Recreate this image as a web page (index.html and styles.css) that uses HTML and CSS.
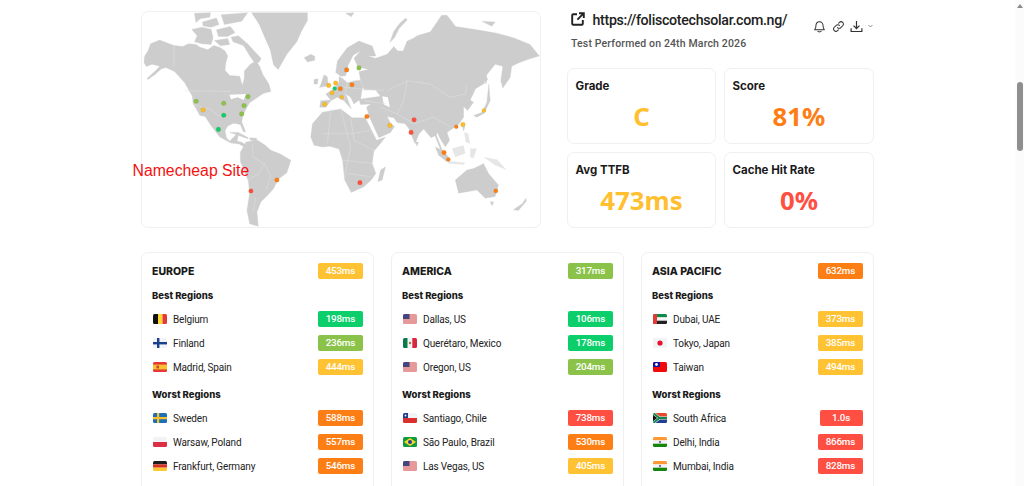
FILE: index.html
```html
<!DOCTYPE html>
<html lang="en">
<head>
    <meta charset="UTF-8">
    <meta name="viewport" content="width=device-width, initial-scale=1.0">
    <title>Test Result</title>
    <link rel="stylesheet" href="styles.css">
</head>
<body>
    <!-- Flags -->
    <svg class="defs" width="0" height="0">
        <symbol id="be" viewBox="0 0 14 10"><rect width="5" height="10" fill="#111"/><rect x="5" width="4.5" height="10" fill="#fdd835"/><rect x="9.5" width="4.5" height="10" fill="#e53935"/></symbol>
        <symbol id="fi" viewBox="0 0 14 10"><rect width="14" height="10" fill="#f1f3f6"/><rect y="4" width="14" height="2.4" fill="#1a3f8b"/><rect x="4" width="2.4" height="10" fill="#1a3f8b"/></symbol>
        <symbol id="es" viewBox="0 0 14 10"><rect width="14" height="10" fill="#e53935"/><rect y="2.6" width="14" height="4.8" fill="#fbc02d"/><rect x="3.5" y="3.6" width="2.4" height="2.8" fill="#c6452b"/></symbol>
        <symbol id="se" viewBox="0 0 14 10"><rect width="14" height="10" fill="#1f6fb5"/><rect y="4" width="14" height="2.2" fill="#fbc02d"/><rect x="4" width="2.2" height="10" fill="#fbc02d"/></symbol>
        <symbol id="pl" viewBox="0 0 14 10"><rect width="14" height="5" fill="#f1f3f6"/><rect y="5" width="14" height="5" fill="#dc2f45"/></symbol>
        <symbol id="de" viewBox="0 0 14 10"><rect width="14" height="3.4" fill="#1c1c1c"/><rect y="3.4" width="14" height="3.3" fill="#d93025"/><rect y="6.7" width="14" height="3.3" fill="#fdc82f"/></symbol>
        <symbol id="us" viewBox="0 0 14 10"><rect width="14" height="10" fill="#f3d3d3"/><path d="M0 1h14M0 3h14M0 5h14M0 7h14M0 9h14" stroke="#d9605f" stroke-width="1"/><rect width="6.5" height="5" fill="#46467f"/></symbol>
        <symbol id="mx" viewBox="0 0 14 10"><rect width="4.7" height="10" fill="#0b7a4b"/><rect x="4.7" width="4.6" height="10" fill="#f4f4f4"/><rect x="9.3" width="4.7" height="10" fill="#d8283f"/><circle cx="7" cy="5" r="1.2" fill="#9a7a4a"/></symbol>
        <symbol id="cl" viewBox="0 0 14 10"><rect width="14" height="5" fill="#f1f3f6"/><rect y="5" width="14" height="5" fill="#da2f2f"/><rect width="5" height="5" fill="#1d3f8f"/><circle cx="2.5" cy="2.5" r=".9" fill="#fff"/></symbol>
        <symbol id="br" viewBox="0 0 14 10"><rect width="14" height="10" fill="#129b3d"/><path d="M7 1 13 5 7 9 1 5Z" fill="#fbd62f"/><circle cx="7" cy="5" r="2" fill="#1f3f8f"/></symbol>
        <symbol id="ae" viewBox="0 0 14 10"><rect width="14" height="3.4" fill="#0b8a4a"/><rect y="3.4" width="14" height="3.3" fill="#f4f4f4"/><rect y="6.7" width="14" height="3.3" fill="#222"/><rect width="4" height="10" fill="#e53935"/></symbol>
        <symbol id="jp" viewBox="0 0 14 10"><rect width="14" height="10" fill="#f1f3f6"/><circle cx="7" cy="5" r="2.6" fill="#e8112d"/></symbol>
        <symbol id="tw" viewBox="0 0 14 10"><rect width="14" height="10" fill="#f00a0a"/><rect width="7" height="5" fill="#12129a"/><circle cx="3.5" cy="2.5" r="1.4" fill="#fff"/></symbol>
        <symbol id="za" viewBox="0 0 14 10"><rect width="14" height="5" fill="#e2492f"/><rect y="5" width="14" height="5" fill="#1f3f8f"/><path d="M0 0 6.5 5 0 10M6 5H14" stroke="#f4f4f4" stroke-width="3" fill="none"/><path d="M0 0 6.5 5 0 10M6 5H14" stroke="#0b8a4a" stroke-width="2" fill="none"/><path d="M0 2 4 5 0 8Z" fill="#111"/></symbol>
        <symbol id="in" viewBox="0 0 14 10"><rect width="14" height="3.4" fill="#ff9933"/><rect y="3.4" width="14" height="3.3" fill="#f4f4f4"/><rect y="6.7" width="14" height="3.3" fill="#138808"/><circle cx="7" cy="5" r="1.2" fill="#7a7ab0"/></symbol>
    </svg>

    <div class="screen">
        <div class="page">
            <div class="top">
                <!-- Map -->
                <div class="card map-card">
                    <svg class="map" viewBox="32 32 1198 650" preserveAspectRatio="none">
                        <g class="land">
                            <path d="M40 165 50 150 58 128 85 117 128 133 155 136 172 128 195 130 205 138 230 146 248 133 268 140 282 150 290 165 284 188 282 208 296 224 326 226 334 254 340 232 340 210 358 190 375 180 386 196 396 222 414 250 420 272 398 278 380 290 356 306 346 324 336 344 332 364 344 394 337 394 328 372 308 368 291 376 282 390 286 412 296 422 306 412 318 400 322 404 318 422 332 426 346 434 340 440 324 431 300 428 266 410 240 376 222 348 206 345 194 322 186 310 183 286 160 245 130 212 104 200 90 204 70 222 50 236 47 233 70 212 86 196 62 190 45 197 38 185Z"/>
                            <path d="M362 34H530V58L512 90 498 122 468 160 442 206 428 192 418 146 400 105 385 70Z"/>
                            <path d="M520 170 540 160 552 166 552 178 530 183Z"/>
                            <path d="M190 36 238 34 236 48 208 52 194 64Z"/>
                            <path d="M182 85 212 78 240 84 246 110 240 130 212 128 190 122 198 104Z"/>
                            <path d="M214 62 256 50 264 70 240 78 216 74Z"/>
                            <path d="M256 86 298 76 312 94 290 106 262 106Z"/>
                            <path d="M250 118 290 112 296 130 268 134Z"/>
                            <path d="M270 40 350 34 332 60 280 70Z"/>
                            <path d="M300 108 322 104 352 130 390 172 386 182 374 190 356 164 338 134 306 122Z"/>
                            <path d="M296 396 322 396 352 412 350 415 320 404Z"/>
                            <path d="M356 412 378 414 376 422 358 420Z"/>
                            <path d="M345 425 380 420 402 434 420 450 450 462 480 480 468 518 442 538 428 566 408 588 390 606 378 636 382 680 356 672 348 632 356 580 352 542 328 484 328 456Z"/>
                            <path d="M540 410 545 370 575 335 630 325 650 340 665 352 704 352 738 420 765 410 748 432 730 452 725 490 736 520 722 540 700 560 662 578 642 540 636 482 625 446 598 438 575 440 550 435Z"/>
                            <path d="M750 510 765 500 755 540 742 545Z"/>
                            <path d="M567 320 570 300 600 298 585 280 610 265 625 245 625 228 635 232 650 246 672 240 690 238 685 212 715 206 682 198 670 172 690 150 668 162 652 194 645 225 630 226 615 215 620 180 650 140 685 120 725 135 736 165 712 166 735 172 770 160 790 136 802 150 818 150 830 120 848 112 860 104 900 92 934 42 950 42 976 76 1040 86 1100 96 1150 110 1200 130 1228 165 1195 175 1165 186 1145 196 1140 230 1118 262 1112 240 1118 196 1095 190 1068 224 1062 248 1036 264 1020 298 1030 305 1012 330 1000 318 1000 350 985 372 950 396 958 420 945 440 928 412 922 396 918 404 935 448 947 466 930 446 914 406 902 412 880 386 866 400 854 430 836 386 824 370 800 366 790 352 770 348 780 368 792 378 780 396 745 412 716 348 708 320 720 310 690 312 685 296 750 287 735 268 702 268 695 262 690 295 670 310 660 290 645 280 662 325 640 300 620 290 600 300 585 320Z"/>
                            <path d="M778 124 790 90 808 66 826 50 830 56 806 82 792 110Z"/>
                            <path d="M570 252 580 222 590 228 592 255 566 260Z"/>
                            <path d="M550 236 562 234 560 250 550 250Z"/>
                            <path d="M1030 345 1056 335 1070 305 1076 250 1080 300 1062 338 1040 350Z"/>
                            <path d="M1062 205 1072 235 1066 250 1062 225Z"/>
                            <path d="M975 540 1010 510 1030 505 1045 498 1060 490 1075 520 1105 555 1095 590 1065 595 1040 570 985 580Z"/>
                            <path d="M1080 606 1090 606 1086 618Z"/>
                            <path d="M1150 630 1176 612 1188 595 1188 605 1165 632Z"/>
                            <path d="M645 36 670 34 662 46Z"/>
                            <path d="M1055 60 1095 62 1085 75Z"/>
                            <path d="M915 440 940 452 960 478 950 485 925 465Z"/>
                            <path d="M855 425 864 425 860 438Z"/>
                            <path d="M997 378 1004 378 1000 392Z"/>
                        </g>
                        <g class="isle">
                            <path d="M965 445 1000 435 1005 460 975 470Z"/>
                            <path d="M950 482 1005 488 1000 494 955 490Z"/>
                            <path d="M1002 395 1014 400 1020 430 1006 425Z"/>
                            <path d="M1020 445 1040 445 1030 475 1020 470Z"/>
                            <path d="M1060 470 1100 478 1130 510 1095 495Z"/>
                        </g>
                        <g class="water">
                            <path d="M295 282 345 280 338 298 320 290 300 296Z"/>
                            <path d="M755 287 772 290 778 320 760 312Z"/>
                        </g>
                        <g class="borders">
                            <path d="M128 133V196M160 270 300 272M186 310 240 328 262 345 285 345"/>
                            <path d="M365 430 365 470 400 490 420 530 405 570M350 540 385 520 400 490M375 590 365 640"/>
                            <path d="M600 325 590 430M630 325 660 440 640 540M660 350 670 420 730 450M575 400 660 400 720 390M635 480 725 490M650 520 720 530"/>
                            <path d="M770 270 830 240 900 250 960 290 1005 280 1010 255M830 240 820 300 800 340 850 370 910 350 960 380M750 320 800 340M700 300 770 310M640 260 760 270M650 245 640 300M690 240 700 265"/>
                        </g>
                        <g class="dots">
                            <circle class="lime" cx="195" cy="302" r="7"/><circle class="lime" cx="278" cy="308" r="7"/><circle class="lime" cx="351" cy="288" r="7"/><circle class="lime" cx="339" cy="315" r="7"/><circle class="lime" cx="332" cy="340" r="7"/><circle class="lime" cx="685" cy="201" r="7"/>
                            <circle class="amber" cx="216" cy="328" r="7"/><circle class="amber" cx="594" cy="254" r="7"/><circle class="amber" cx="615" cy="247" r="7"/><circle class="amber" cx="604" cy="276" r="7"/><circle class="amber" cx="633" cy="290" r="6"/><circle class="amber" cx="582" cy="311" r="7"/><circle class="amber" cx="778" cy="375" r="7"/><circle class="amber" cx="998" cy="372" r="7"/><circle class="amber" cx="1061" cy="330" r="6"/>
                            <circle class="green" cx="278" cy="344" r="7"/><circle class="green" cx="262" cy="387" r="7"/><circle class="green" cx="612" cy="263" r="6"/>
                            <circle class="orange" cx="648" cy="207" r="7"/><circle class="orange" cx="629" cy="264" r="7"/><circle class="orange" cx="664" cy="252" r="7"/><circle class="orange" cx="709" cy="348" r="7"/><circle class="orange" cx="978" cy="379" r="6"/><circle class="orange" cx="941" cy="457" r="7"/><circle class="orange" cx="954" cy="478" r="6"/><circle class="orange" cx="438" cy="540" r="7"/><circle class="orange" cx="1097" cy="573" r="6.5"/>
                            <circle class="red" cx="851" cy="358" r="7"/><circle class="red" cx="842" cy="396" r="7"/><circle class="red" cx="688" cy="548" r="7"/><circle class="red" cx="360" cy="573" r="7"/>
                        </g>
                    </svg>
                    <span class="map-label">Namecheap Site</span>
                </div>

                <!-- Summary -->
                <div class="summary">
                    <div class="head">
                        <div class="head-text">
                            <div class="url">
                                <svg class="ext" viewBox="0 0 14 14"><path d="M6 2.2H2.2a1 1 0 0 0-1 1v8.6a1 1 0 0 0 1 1h8.6a1 1 0 0 0 1-1V8M8 1.2h4.8V6M12.6 1.4 6.4 7.6" fill="none" stroke="#222" stroke-width="1.9"/></svg>
                                <span>https://foliscotechsolar.com.ng/</span>
                            </div>
                            <div class="tested">Test Performed on 24th March 2026</div>
                        </div>
                        <div class="tools">
                            <svg class="tool" viewBox="0 0 14 14"><path d="M1.8 10.4c.9-.8 1.3-1.6 1.3-3.6 0-2.8 1.6-4.9 3.9-4.9s3.9 2.1 3.9 4.9c0 2 .4 2.8 1.3 3.6ZM5.2 12.2c.5.8 3.1.8 3.6 0" fill="none" stroke="#333" stroke-width="1.1" stroke-linejoin="round" stroke-linecap="round"/></svg>
                            <svg class="tool" viewBox="0 0 14 14"><path d="M6 8.2a2.4 2.4 0 0 0 3.5 0l2-2A2.5 2.5 0 0 0 8 2.6l-.8.8M8 5.8a2.4 2.4 0 0 0-3.5 0l-2 2A2.5 2.5 0 0 0 6 11.4l.8-.8" fill="none" stroke="#333" stroke-width="1.1" stroke-linecap="round"/></svg>
                            <svg class="tool" viewBox="0 0 14 14"><path d="M7 1v8M3.8 6 7 9.2 10.2 6M1.2 8.8v3.6h11.6V8.8" fill="none" stroke="#333" stroke-width="1.3"/></svg>
                            <svg class="chev" viewBox="0 0 6 4"><path d="M.6.8 3 3.2 5.4.8" fill="none" stroke="#777" stroke-width="1"/></svg>
                        </div>
                    </div>
                    <div class="stats">
                        <div class="card stat"><div class="stat-label">Grade</div><div class="stat-value t-amber">C</div></div>
                        <div class="card stat"><div class="stat-label">Score</div><div class="stat-value t-orange">81%</div></div>
                        <div class="card stat"><div class="stat-label">Avg TTFB</div><div class="stat-value t-amber">473ms</div></div>
                        <div class="card stat"><div class="stat-label">Cache Hit Rate</div><div class="stat-value t-red">0%</div></div>
                    </div>
                </div>
            </div>

            <!-- Regions -->
            <div class="regions">
                <div class="card region">
                    <div class="region-head"><h3>EUROPE</h3><span class="ms amber">453ms</span></div>
                    <h4>Best Regions</h4>
                    <div class="row"><svg class="flag"><use href="#be"/></svg><span>Belgium</span><span class="ms green">198ms</span></div>
                    <div class="row"><svg class="flag"><use href="#fi"/></svg><span>Finland</span><span class="ms lime">236ms</span></div>
                    <div class="row"><svg class="flag"><use href="#es"/></svg><span>Madrid, Spain</span><span class="ms amber">444ms</span></div>
                    <h4 class="worst">Worst Regions</h4>
                    <div class="row"><svg class="flag"><use href="#se"/></svg><span>Sweden</span><span class="ms orange">588ms</span></div>
                    <div class="row"><svg class="flag"><use href="#pl"/></svg><span>Warsaw, Poland</span><span class="ms orange">557ms</span></div>
                    <div class="row"><svg class="flag"><use href="#de"/></svg><span>Frankfurt, Germany</span><span class="ms orange">546ms</span></div>
                </div>
                <div class="card region">
                    <div class="region-head"><h3>AMERICA</h3><span class="ms lime">317ms</span></div>
                    <h4>Best Regions</h4>
                    <div class="row"><svg class="flag"><use href="#us"/></svg><span>Dallas, US</span><span class="ms green">106ms</span></div>
                    <div class="row"><svg class="flag"><use href="#mx"/></svg><span>Querétaro, Mexico</span><span class="ms green">178ms</span></div>
                    <div class="row"><svg class="flag"><use href="#us"/></svg><span>Oregon, US</span><span class="ms lime">204ms</span></div>
                    <h4 class="worst">Worst Regions</h4>
                    <div class="row"><svg class="flag"><use href="#cl"/></svg><span>Santiago, Chile</span><span class="ms red">738ms</span></div>
                    <div class="row"><svg class="flag"><use href="#br"/></svg><span>São Paulo, Brazil</span><span class="ms orange">530ms</span></div>
                    <div class="row"><svg class="flag"><use href="#us"/></svg><span>Las Vegas, US</span><span class="ms amber">405ms</span></div>
                </div>
                <div class="card region">
                    <div class="region-head"><h3>ASIA PACIFIC</h3><span class="ms orange">632ms</span></div>
                    <h4>Best Regions</h4>
                    <div class="row"><svg class="flag"><use href="#ae"/></svg><span>Dubai, UAE</span><span class="ms amber">373ms</span></div>
                    <div class="row"><svg class="flag"><use href="#jp"/></svg><span>Tokyo, Japan</span><span class="ms amber">385ms</span></div>
                    <div class="row"><svg class="flag"><use href="#tw"/></svg><span>Taiwan</span><span class="ms amber">494ms</span></div>
                    <h4 class="worst">Worst Regions</h4>
                    <div class="row"><svg class="flag"><use href="#za"/></svg><span>South Africa</span><span class="ms red">1.0s</span></div>
                    <div class="row"><svg class="flag"><use href="#in"/></svg><span>Delhi, India</span><span class="ms red">866ms</span></div>
                    <div class="row"><svg class="flag"><use href="#in"/></svg><span>Mumbai, India</span><span class="ms red">828ms</span></div>
                </div>
            </div>
        </div>

        <!-- Scrollbar -->
        <div class="scrollbar">
            <div class="arrow"></div>
            <div class="thumb"></div>
        </div>
    </div>
</body>
</html>
```

FILE: styles.css
```css
* { margin: 0; padding: 0; box-sizing: border-box; }
html, body { height: 100%; overflow: hidden; }
body { font-family: Roboto, sans-serif; background: white; color: #222; }
.defs { position: absolute; }

.screen { display: flex; height: 486px; overflow: hidden; }
.page { flex: 1; padding: 11px 0 0 140.5px; overflow: hidden; }

/* Scrollbar */
.scrollbar { width: 9px; background: #fbfbfb; padding: 4px 1px 0 2px; }
.arrow { width: 0; height: 0; margin-left: 0; border: 3px solid transparent; border-top: 0; border-bottom: 4px solid #8a8a8a; }
.thumb { width: 6px; height: 69px; margin-top: 74px; background: #8f8f8f; border-radius: 3px; }

.card { border: 1px solid #f0f0f0; border-radius: 7px; background: white; }

/* Top */
.top { display: grid; grid-template-columns: 400px 307px; column-gap: 26.5px; width: 733.5px; }
.map-card { position: relative; height: 217px; overflow: visible; }
.map { display: block; width: 100%; height: 100%; border-radius: 7px; }
.land path { fill: #cdcdcd; stroke: #cdcdcd; stroke-width: 1; stroke-linejoin: round; }
.isle path { fill: #e6e6e6; }
.water path { fill: white; }
.borders path { fill: none; stroke: #e2e2e2; stroke-width: 1.5; }
.dots circle { stroke-width: 1; stroke: rgba(120, 100, 20, 0.35); }
.dots .lime { fill: #8bc34a; }
.dots .amber { fill: #fbbc2c; }
.dots .green { fill: #0cce6b; }
.dots .orange { fill: #fd7e14; }
.dots .red { fill: #ff4e42; }
.map-label { position: absolute; left: -9px; top: 150px; font-family: "Liberation Sans", sans-serif; font-size: 15.8px; color: #f41010; white-space: nowrap; }

/* Summary */
.head { display: flex; justify-content: space-between; height: 57px; padding-left: 4px; }
.url { display: flex; align-items: center; gap: 7.5px; font-size: 14.2px; font-weight: 500; letter-spacing: -0.3px; height: 18px; }
.ext { width: 14px; height: 14px; margin-top: -3px; }
.tested { font-size: 10.5px; font-weight: 500; letter-spacing: 0.15px; color: #555; margin-top: 8px; }
.tools { display: flex; align-items: center; gap: 5.5px; height: 14px; margin-top: 8px; padding-right: 1.5px; }
.tool { width: 13px; height: 13px; }
.chev { width: 5px; height: 4px; margin-left: -1px; }
.stats { display: grid; grid-template-columns: 149px 150px; column-gap: 8px; row-gap: 8px; }
.stat { height: 76px; padding: 9.5px 7.5px; }
.stat-label { font-family: Inter, sans-serif; font-size: 11.5px; font-weight: 700; color: #1a1a1a; }
.stat-value { font-family: "Noto Sans", sans-serif; font-size: 25.8px; font-weight: 700; text-align: center; line-height: 34px; margin-top: 6px; }
.t-amber { color: #ffbf2f; }
.t-orange { color: #fd7e14; }
.t-red { color: #ff4e42; }

/* Regions */
.regions { display: grid; grid-template-columns: repeat(3, 233px); column-gap: 17px; margin-top: 23.5px; }
.region { padding: 10.5px 10px 11px 10.5px; height: 260px; font-size: 10px; letter-spacing: -0.15px; }
.region-head { display: flex; justify-content: space-between; align-items: center; height: 16px; }
h3 { font-family: Inter, sans-serif; font-size: 10.5px; font-weight: 800; letter-spacing: 0; color: #1a1a1a; }
h4 { font-family: Inter, sans-serif; font-size: 9.5px; font-weight: 800; letter-spacing: 0; color: #1a1a1a; margin-top: 10px; line-height: 14px; }
h4.worst { margin-top: 8.5px; }
.row { display: flex; align-items: center; height: 24px; }
h4 + .row { margin-top: 4px; }
h4.worst + .row { margin-top: 4.5px; }
.row span:first-of-type { flex: 1; margin-left: 6px; color: #222; }
.flag { width: 14px; height: 10px; border-radius: 1.5px; margin-left: 1px; }
.ms { color: white; font-size: 9.8px; font-weight: 500; letter-spacing: -0.2px; min-width: 43px; text-align: center; height: 16px; line-height: 16px; padding: 0 7.5px; border-radius: 2px; }
.green { background: #0cce6b; }
.lime { background: #8bc34a; }
.amber { background: #ffc233; }
.orange { background: #fd7e14; }
.red { background: #ff4e42; }
```
